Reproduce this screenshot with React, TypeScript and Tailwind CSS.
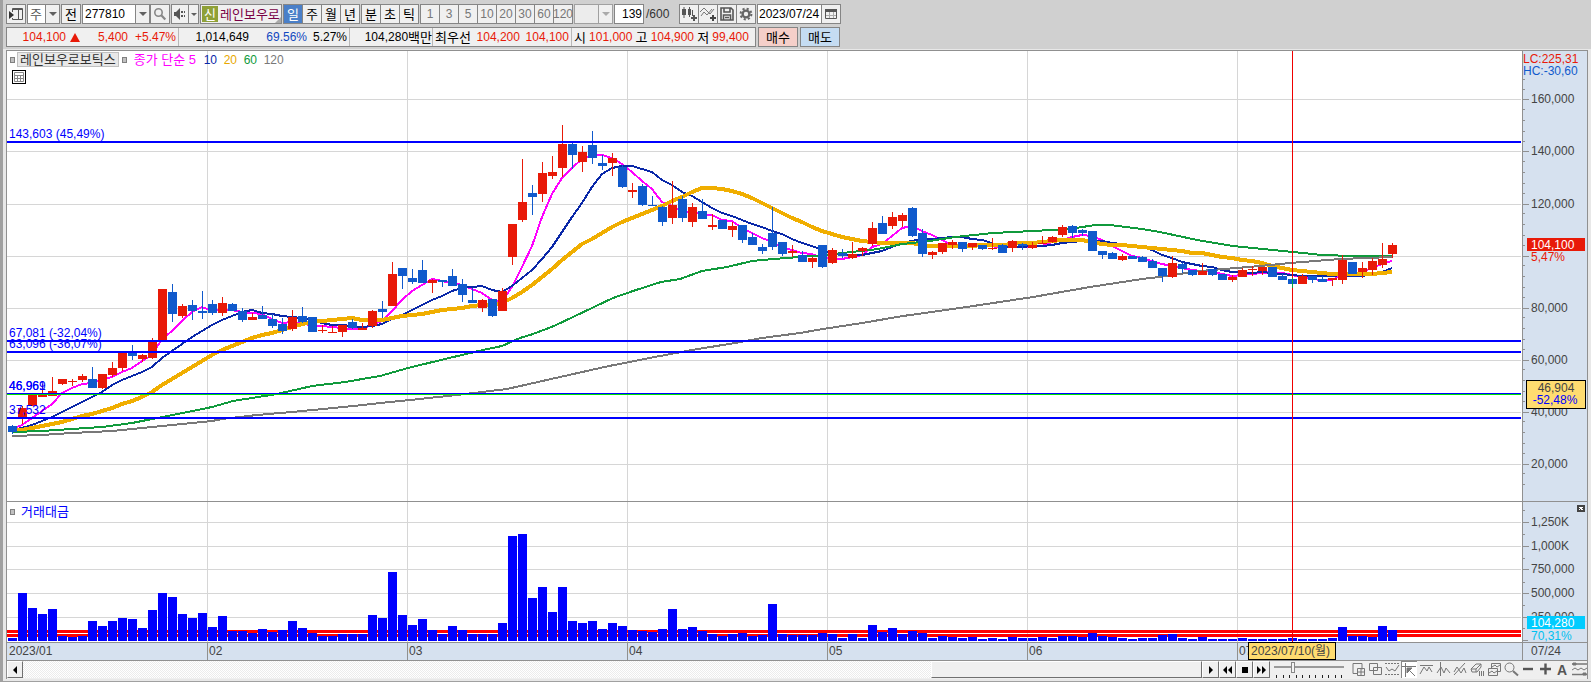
import React, { useState } from 'react';
import clsx from 'clsx';

type Direction = 'u' | 'd';
// body top, body bottom, high, low (chart y), direction
type Candle = [number, number, number, number, Direction];

const CANDLES: Candle[] = [
    [426, 432, 425, 434, 'd'], [408, 417, 406, 424, 'u'], [395, 406, 395, 406, 'u'], [394, 397, 384, 397, 'u'],
    [391, 396, 377, 396, 'u'], [379, 384, 379, 385, 'u'], [381, 382, 379, 386, 'u'], [376, 380, 374, 382, 'u'],
    [379, 388, 367, 388, 'd'], [374, 388, 374, 389, 'u'], [368, 375, 362, 377, 'u'], [353, 368, 353, 371, 'u'],
    [353, 356, 345, 360, 'd'], [355, 359, 354, 362, 'u'], [341, 358, 338, 359, 'u'], [289, 340, 289, 340, 'u'],
    [292, 314, 284, 322, 'd'], [306, 316, 304, 318, 'u'], [305, 311, 300, 320, 'd'], [311, 313, 291, 319, 'd'],
    [304, 313, 300, 315, 'd'], [303, 313, 297, 316, 'u'], [304, 311, 303, 311, 'd'], [311, 320, 308, 322, 'd'],
    [317, 320, 313, 320, 'u'], [315, 319, 306, 319, 'd'], [319, 326, 314, 328, 'd'], [324, 331, 318, 334, 'd'],
    [317, 329, 310, 331, 'u'], [316, 322, 307, 323, 'd'], [317, 332, 317, 332, 'd'], [330, 331, 325, 333, 'u'],
    [332, 333, 326, 333, 'u'], [325, 332, 325, 337, 'u'], [322, 328, 319, 329, 'd'], [328, 330, 323, 330, 'u'],
    [311, 326, 310, 328, 'u'], [309, 312, 301, 318, 'd'], [274, 306, 262, 306, 'u'], [268, 276, 268, 289, 'd'],
    [278, 282, 269, 284, 'd'], [270, 283, 260, 283, 'd'], [280, 283, 279, 293, 'u'], [280, 282, 280, 287, 'd'],
    [276, 286, 269, 286, 'd'], [284, 295, 279, 302, 'd'], [300, 303, 288, 303, 'd'], [300, 308, 299, 312, 'u'],
    [299, 316, 299, 317, 'd'], [291, 311, 288, 311, 'u'], [224, 257, 224, 265, 'u'], [202, 220, 159, 222, 'u'],
    [193, 197, 185, 215, 'd'], [173, 194, 162, 202, 'u'], [172, 176, 156, 179, 'u'], [144, 168, 125, 177, 'u'],
    [144, 155, 143, 169, 'd'], [152, 162, 146, 172, 'u'], [145, 158, 131, 164, 'd'], [163, 166, 155, 170, 'd'],
    [158, 163, 153, 176, 'u'], [167, 187, 165, 188, 'd'], [190, 192, 183, 198, 'u'], [186, 205, 184, 206, 'd'],
    [205, 206, 196, 206, 'd'], [207, 222, 206, 226, 'd'], [205, 218, 181, 224, 'u'], [199, 218, 196, 222, 'd'],
    [207, 222, 203, 227, 'u'], [211, 219, 199, 219, 'd'], [225, 227, 214, 230, 'u'], [220, 229, 220, 229, 'd'],
    [226, 230, 222, 237, 'u'], [225, 240, 225, 243, 'd'], [237, 245, 233, 245, 'd'], [247, 251, 244, 254, 'd'],
    [233, 247, 207, 250, 'd'], [242, 254, 242, 256, 'd'], [251, 253, 245, 257, 'u'], [255, 262, 251, 262, 'd'],
    [258, 262, 257, 268, 'u'], [245, 267, 245, 268, 'd'], [250, 263, 248, 264, 'u'], [253, 256, 249, 258, 'd'],
    [254, 258, 242, 259, 'u'], [248, 251, 247, 256, 'u'], [228, 244, 222, 246, 'u'], [223, 234, 216, 234, 'd'],
    [217, 226, 212, 229, 'u'], [215, 221, 213, 227, 'u'], [208, 236, 207, 237, 'd'], [233, 254, 229, 257, 'd'],
    [252, 255, 251, 259, 'u'], [243, 252, 243, 254, 'u'], [242, 245, 240, 249, 'u'], [242, 249, 242, 252, 'd'],
    [243, 247, 243, 250, 'u'], [245, 249, 245, 250, 'd'], [248, 249, 238, 250, 'u'], [245, 253, 244, 253, 'd'],
    [241, 248, 240, 252, 'u'], [244, 246, 243, 250, 'd'], [245, 248, 242, 249, 'u'], [243, 244, 236, 244, 'u'],
    [237, 242, 236, 243, 'u'], [227, 235, 225, 237, 'u'], [226, 233, 225, 238, 'd'], [230, 233, 229, 236, 'd'],
    [231, 251, 231, 251, 'd'], [251, 255, 251, 259, 'd'], [253, 259, 252, 259, 'd'], [256, 260, 254, 261, 'u'],
    [256, 259, 256, 259, 'd'], [257, 262, 256, 262, 'd'], [261, 268, 259, 268, 'd'], [268, 276, 268, 282, 'd'],
    [263, 277, 256, 278, 'u'], [264, 269, 263, 273, 'd'], [270, 275, 270, 276, 'd'], [271, 275, 263, 275, 'u'],
    [269, 275, 269, 276, 'd'], [274, 280, 274, 280, 'd'], [277, 280, 275, 282, 'u'], [270, 277, 268, 277, 'u'],
    [269, 270, 266, 276, 'u'], [267, 271, 267, 275, 'u'], [267, 277, 267, 277, 'd'], [276, 280, 274, 280, 'd'],
    [279, 284, 279, 284, 'd'], [276, 284, 274, 284, 'u'], [276, 280, 276, 283, 'd'], [279, 282, 276, 282, 'd'],
    [278, 280, 278, 286, 'u'], [260, 280, 255, 284, 'u'], [262, 274, 262, 274, 'd'], [268, 272, 262, 278, 'u'],
    [261, 270, 258, 275, 'u'], [259, 265, 243, 268, 'u'], [245, 254, 243, 258, 'u'],
];

// bar tops, the base line is at 641
const VOLUME = [
    638, 593, 608, 614, 609, 636, 637, 636, 621, 626, 621, 618, 619, 628, 610, 593, 597, 614, 618, 613,
    627, 616, 631, 631, 633, 629, 632, 630, 621, 628, 633, 636, 636, 634, 634, 634, 615, 618, 572, 615,
    625, 619, 630, 634, 626, 630, 634, 634, 634, 623, 536, 534, 598, 587, 612, 587, 621, 623, 621, 629,
    623, 626, 630, 631, 632, 629, 609, 629, 627, 631, 634, 636, 634, 633, 636, 635, 604, 634, 635, 635,
    635, 633, 634, 638, 634, 638, 625, 632, 628, 634, 631, 633, 638, 636, 637, 638, 637, 639, 638, 639,
    637, 638, 638, 637, 638, 636, 636, 637, 633, 636, 637, 638, 639, 638, 638, 635, 634, 638, 639, 637,
    639, 639, 639, 638, 639, 639, 639, 639, 638, 639, 639, 639, 638, 627, 636, 636, 637, 626, 630,
];

const MA60 =
    '12,432 42,431 72,429 102,427 132,423 152,419 163,417 212,407 233,401 277,394 312,386 345,382 380,376 408,368 445,359 483,350 502,346 520,338 533,334 554,326 573,317 613,298 633,291 661,282 680,279 702,271 727,267 752,261 773,259 800,257 813,256 843,253 878,249 902,244 930,241 955,237 993,233 1033,231 1070,229 1095,225 1110,225 1142,229 1160,232 1197,240 1233,246 1293,252 1322,255 1353,256 1392,256';
const MA120 =
    '12,436 42,435 72,433 112,431 132,429 172,425 212,421 222,419 257,415 292,412 323,409 353,406 390,402 410,400 457,395 507,389 560,377 609,366 660,356 692,350 735,343 762,338 800,333 823,329 862,323 903,316 960,308 1033,297 1090,287 1142,279 1160,277 1200,271 1260,266 1290,263 1340,259 1392,257';

const PRICE_TICKS: [number, string][] = [
    [99, '160,000'], [151, '140,000'], [204, '120,000'], [256, ''],
    [308, '80,000'], [360, '60,000'], [412, '40,000'], [464, '20,000'],
];
const VOLUME_TICKS: [number, string][] = [
    [522, '1,250K'], [546, '1,000K'], [569, '750,000'], [593, '500,000'], [617, '250,000'],
];
const MONTHS: [number, string][] = [[207, '02'], [407, '03'], [627, '04'], [827, '05'], [1027, '06'], [1237, '07']];
const LEVELS: [number, string][] = [
    [142, '143,603 (45,49%)'], [341, '67,081 (-32,04%)'], [352, '63,096 (-36,07%)'], [418, '37,532'],
];

const PERIODS = ['일', '주', '월', '년'];
const UNITS = ['분', '초', '틱'];
const MINUTES = ['1', '3', '5', '10', '20', '30', '60', '120'];

const candleX = (i: number) => 8 + i * 10;

// Moving average of the closes, bars before the first one count as `before`
function movingAverage(size: number, before: number) {
    const closes = CANDLES.map(([top, bottom, , , dir]) => (dir === 'u' ? top : bottom));
    return closes
        .map((_, i) => {
            let sum = 0;
            for (let k = i - size + 1; k <= i; k++) {
                sum += k < 0 ? before : closes[k];
            }
            return `${candleX(i) + 4},${Math.round(sum / size)}`;
        })
        .join(' ');
}

const box = 'h-5 border border-[#858585] bg-[#f0f0f0] flex items-center justify-center shrink-0';

function Arrow({ className = 'text-[#606060]' }: { className?: string }) {
    return (
        <svg viewBox="0 0 8 4" className={clsx('w-2 h-1 shrink-0', className)} fill="currentColor">
            <path d="M0 0h8L4 4z" />
        </svg>
    );
}

function IconButton({ label, className, children }: { label: string; className: string; children: React.ReactNode }) {
    return (
        <button type="button" aria-label={label} className={clsx(box, className)}>
            {children}
        </button>
    );
}

function Toolbar() {
    const [period, setPeriod] = useState('일');
    const [code, setCode] = useState('277810');

    return (
        <div className="flex items-center text-[13px] leading-none text-black">
            <IconButton label="메뉴" className="w-5 mr-px">
                <svg viewBox="0 0 14 14" className="size-3.5" fill="none" stroke="#555">
                    <path d="M3.5 5V1.5h10v11h-10V11M3 2.5h11M9.5 3v9" />
                    <path d="M0 4l5 4-5 4z" fill="#333" stroke="none" />
                </svg>
            </IconButton>
            <div className="flex mr-px">
                <select aria-label="종목 구분" className="appearance-none h-5 w-[18px] pl-0.5 border border-r-0 border-[#858585] bg-white text-[#555]">
                    <option>주</option>
                </select>
                <span className={clsx(box, 'w-[15px]')}><Arrow /></span>
            </div>
            <button type="button" className={clsx(box, 'w-5 mr-px')}>전</button>
            <input
                aria-label="종목코드"
                value={code}
                onChange={e => setCode(e.target.value)}
                className="h-5 w-[54px] pl-0.5 border border-[#858585] bg-white text-xs leading-none"
            />
            <IconButton label="종목 목록" className="w-[15px] -ml-px"><Arrow /></IconButton>
            <IconButton label="검색" className="w-5 mr-px">
                <svg viewBox="0 0 14 14" className="size-3.5" fill="none" stroke="#888" strokeWidth="1.6">
                    <circle cx="5.5" cy="5.5" r="3.7" />
                    <path d="M8.3 8.3l4 4.2" strokeWidth="2.2" />
                </svg>
            </IconButton>
            <IconButton label="소리" className="w-[18px]">
                <svg viewBox="0 0 14 14" className="size-3.5" fill="#555">
                    <path d="M1 5h2l4-4v12L3 9H1zM8 4h2v2H8zM8 8h2v2H8zM11 4h1v2h-1zM11 8h1v2h-1z" />
                </svg>
            </IconButton>
            <IconButton label="소리 설정" className="w-[11px] -ml-px mr-px">
                <svg viewBox="0 0 6 3" className="w-1.5 h-[3px] shrink-0" fill="#606060"><path d="M0 0h6L3 3z" /></svg>
            </IconButton>
            <div className="relative flex h-5 w-[82px] items-center mr-px pl-px border border-[#858585] bg-[#f0f0f0] overflow-hidden whitespace-nowrap">
                <span className="flex h-4 w-4 shrink-0 items-center justify-center bg-[#8fa037] text-white">신</span>
                <span className="ml-0.5 text-[#7a0045]">레인보우로</span>
                <svg viewBox="0 0 6 6" className="absolute right-0 bottom-0 size-1.5" fill="#aaa"><path d="M6 0v6H0z" /></svg>
            </div>
            <div className="flex mr-px">
                {PERIODS.map(p => (
                    <button
                        key={p}
                        type="button"
                        onClick={() => setPeriod(p)}
                        className={clsx(box, 'w-5 -mr-px', p === period && 'bg-[#4a7fc8]! text-white')}
                    >
                        {p}
                    </button>
                ))}
            </div>
            <div className="flex ml-px mr-0.5">
                {UNITS.map(u => (
                    <button key={u} type="button" className={clsx(box, 'w-5 -mr-px')}>{u}</button>
                ))}
            </div>
            <div className="flex mr-0.5">
                {MINUTES.map(m => (
                    <button key={m} type="button" className={clsx(box, 'w-5 -mr-px text-xs text-[#777]')}>{m}</button>
                ))}
            </div>
            <div className="flex mr-px">
                <select aria-label="분 선택" disabled className="appearance-none h-5 w-6 border border-r-0 border-[#a0a0a0] bg-[#ececec]" />
                <span className={clsx(box, 'w-[15px] border-[#a0a0a0]')}><Arrow className="text-[#aaa]" /></span>
            </div>
            <input
                aria-label="표시 봉 개수"
                defaultValue="139"
                className="h-5 w-[30px] pr-px border border-[#858585] bg-white text-right text-xs leading-none"
            />
            <span className="ml-0.5 w-[33px] text-xs leading-none text-[#333]">/600</span>
            <IconButton label="지표 추가" className="w-5">
                <svg viewBox="0 0 16 16" className="size-4 shrink-0" fill="#555">
                    <path d="M1 3h4v6H1zM2.5 1h1v11h-1zM7 3h3v6H7zM8 1h1v10H8zM11 4h1v6h-1zM12 9h2v2h2v2h-2v2h-2v-2h-2v-2h2z" />
                </svg>
            </IconButton>
            <IconButton label="차트 추가" className="w-5 -ml-px">
                <svg viewBox="0 0 16 16" className="size-4 shrink-0" fill="none" stroke="#777">
                    <path d="M0 6l4-4 6 6 4-5M1 10l3-4 3 3 5-6" />
                    <path d="M12 9h2v2h2v2h-2v2h-2v-2h-2v-2h2z" fill="#444" stroke="none" />
                </svg>
            </IconButton>
            <IconButton label="저장" className="w-5 -ml-px">
                <svg viewBox="0 0 14 14" className="size-3.5" fill="none" stroke="#555" strokeWidth="1.6">
                    <path d="M1 1h10l2 2v10H1zM4 1v4h6V1M3.5 13V8h7v5M5 10.5h4" />
                </svg>
            </IconButton>
            <IconButton label="설정" className="w-5 -ml-px mr-px">
                <svg viewBox="0 0 14 14" className="size-3.5" fill="none" stroke="#666">
                    <circle cx="7" cy="7" r="3.4" strokeWidth="2.4" />
                    <circle cx="7" cy="7" r="5.4" strokeWidth="2" strokeDasharray="2.12 2.12" />
                </svg>
            </IconButton>
            <input
                aria-label="기준일"
                defaultValue="2023/07/24"
                className="h-5 w-[65px] pl-px border border-[#858585] bg-white text-xs leading-none"
            />
            <IconButton label="달력" className="w-5 -ml-px">
                <svg viewBox="0 0 12 12" className="size-3" fill="none" stroke="#555">
                    <path d="M.5 1.5h11v9H.5z" />
                    <path d="M0 2.5h12" strokeWidth="3" />
                    <path d="M1 7.5h10M4.5 4v6M8.5 4v6" stroke="#aaa" />
                </svg>
            </IconButton>
        </div>
    );
}

function Quote() {
    return (
        <div className="flex text-xs leading-none text-black">
            <div className="flex h-5 w-[750px] shrink-0 items-center mr-0.5 border border-[#858585] bg-[#f0f0f0] whitespace-nowrap text-[#e81a08]">
                <div className="flex h-full w-[172px] items-center justify-end pr-0.5 border-r border-[#b8b8b8]">
                    <span>104,100</span>
                    <svg viewBox="0 0 10 9" className="w-2.5 h-[9px] ml-1" fill="currentColor"><path d="M5 0l5 9H0z" /></svg>
                    <span className="w-12 text-right">5,400</span>
                    <span className="w-12 text-right">+5.47%</span>
                </div>
                <div className="flex h-full w-[171px] items-center justify-end pr-0.5 border-r border-[#b8b8b8] text-black">
                    <span>1,014,649</span>
                    <span className="w-[58px] text-right text-[#1048c0]">69.56%</span>
                    <span className="w-10 text-right">5.27%</span>
                </div>
                <div className="flex h-full w-[83px] items-center justify-end border-r border-[#b8b8b8] text-black">
                    <span>104,280</span><span className="text-[13px] leading-none">백만</span>
                </div>
                <div className="flex h-full w-[139px] items-center justify-between px-0.5 border-r border-[#b8b8b8]">
                    <span className="text-[13px] leading-none text-black">최우선</span>
                    <span>104,200</span>
                    <span>104,100</span>
                </div>
                <div className="flex h-full flex-1 items-center justify-between pl-0.5 pr-1.5">
                    <span className="text-[13px] leading-none text-black">시</span><span>101,000</span>
                    <span className="text-[13px] leading-none text-black">고</span><span>104,900</span>
                    <span className="text-[13px] leading-none text-black">저</span><span>99,400</span>
                </div>
            </div>
            <button type="button" className="h-5 w-10 mr-0.5 border border-[#858585] bg-[#f5cfc9] text-[13px] leading-none">매수</button>
            <button type="button" className="h-5 w-10 border border-[#858585] bg-[#c5dcf2] text-[13px] leading-none">매도</button>
        </div>
    );
}

function PlotArea() {
    return (
        <svg
            viewBox="7 51 1515 609"
            preserveAspectRatio="none"
            className="h-[609px] w-0 min-w-0 flex-1 bg-white text-xs"
            shapeRendering="crispEdges"
        >
            {/* grid */}
            {[...PRICE_TICKS, ...VOLUME_TICKS].map(([y]) => (
                <rect key={y} x="7" y={y} width="1514" height="1" fill="#d6d6d6" />
            ))}
            {MONTHS.map(([x]) => (
                <rect key={x} x={x} y="51" width="1" height="591" fill="#d6d6d6" />
            ))}
            <rect x="7" y="501" width="1515" height="1" fill="#909090" />

            {/* moving averages */}
            <g fill="none" strokeWidth="2" strokeLinejoin="round">
                <polyline points={movingAverage(5, 428)} stroke="#ff00ff" />
                <polyline points={movingAverage(10, 430)} stroke="#0a28a8" />
                <polyline points={movingAverage(20, 431)} stroke="#f0ae00" strokeWidth="4" />
                <polyline points={MA60} stroke="#109a3c" />
                <polyline points={MA120} stroke="#787878" />
            </g>

            {CANDLES.map(([top, bottom, high, low, dir], i) => (
                <g key={i} fill={dir === 'u' ? '#e81a08' : '#105acc'}>
                    <rect x={candleX(i) + 4} y={high} width="1" height={low - high} />
                    <rect x={candleX(i)} y={top} width="9" height={bottom - top} />
                </g>
            ))}

            {LEVELS.map(([y, label]) => (
                <g key={y} fill="#0000ff">
                    <rect x="7" y={y - 1} width="1514" height="2" />
                    <text x="9" y={y - 4}>{label}</text>
                </g>
            ))}
            <rect x="7" y="393" width="1514" height="1" fill="#0000ff" />
            <rect x="7" y="394" width="1514" height="1" fill="#00e000" />
            <text x="9" y="390" fill="#0000ff">46,969</text>
            <text x="9" y="390" fill="#0000ff">46,961</text>

            {/* traded value */}
            <rect x="7" y="630" width="1514" height="3" fill="#ff0000" />
            <rect x="7" y="634" width="1514" height="3" fill="#ff0000" />
            {VOLUME.map((y, i) => (
                <rect key={i} x={candleX(i)} y={y} width="9" height={641 - y} fill="#0000ff" />
            ))}

            {/* date axis */}
            <rect x="7" y="642" width="1515" height="18" fill="#d6e1ef" />
            <rect x="7" y="642" width="1515" height="1" fill="#909090" />
            <g fill="#444444">
                <text x="9" y="655">2023/01</text>
                {MONTHS.map(([x, label]) => (
                    <React.Fragment key={x}>
                        <rect x={x} y="642" width="1" height="18" fill="#909090" />
                        <text x={x + 2} y="655">{label}</text>
                    </React.Fragment>
                ))}
            </g>

            {/* crosshair */}
            <rect x="1292" y="51" width="1" height="591" fill="#f00000" />
            <rect x="1292" y="278" width="1" height="10" fill="#00a040" />
            <rect x="1248" y="642" width="88" height="18" fill="#000" />
            <rect x="1249" y="643" width="86" height="16" fill="#ffdc70" />
            <text x="1251" y="655" fill="#444">2023/07/10(월)</text>
        </svg>
    );
}

function ValueAxis() {
    const minor: number[] = [];
    for (let y = 79; y < 490; y += 52) {
        minor.push(y, y + 10);
        if (y + 41 < 500) {
            minor.push(y + 30, y + 41);
        }
    }
    return (
        <svg viewBox="1522 51 65 609" className="h-[609px] w-[65px] shrink-0 bg-[#d6e1ef] text-xs" shapeRendering="crispEdges">
            <g fill="#909090">
                <rect x="1522" y="51" width="1" height="609" />
                <rect x="1522" y="501" width="65" height="1" />
                <rect x="1522" y="642" width="65" height="1" />
                <rect x="1522" y="640" width="6" height="1" />
                {[...minor, 510, 534, 558, 582, 605, 628].map(y => (
                    <rect key={y} x="1522" y={y} width="3" height="1" />
                ))}
                {[...PRICE_TICKS, ...VOLUME_TICKS].map(([y]) => (
                    <rect key={y} x="1522" y={y} width="7" height="1" />
                ))}
            </g>
            <g fill="#444444">
                {[...PRICE_TICKS, ...VOLUME_TICKS].map(([y, label]) => (
                    <text key={y} x="1531" y={y + 4}>{label}</text>
                ))}
                <text x="1531" y="655">07/24</text>
            </g>
            <text x="1523" y="63" fill="#e81a08">LC:225,31</text>
            <text x="1523" y="75" fill="#105acc">HC:-30,60</text>

            <rect x="1527" y="238" width="58" height="13" fill="#e81a08" />
            <text x="1531" y="249" fill="#fff">104,100</text>
            <text x="1531" y="261" fill="#e81a08">5,47%</text>

            <rect x="1526" y="380" width="60" height="29" fill="#000" />
            <rect x="1527" y="381" width="58" height="27" fill="#ffdc70" />
            <text x="1556" y="392" textAnchor="middle" fill="#444">46,904</text>
            <text x="1555" y="404" textAnchor="middle" fill="#0000ff">-52,48%</text>

            <rect x="1527" y="616" width="58" height="13" fill="#00ccff" />
            <text x="1531" y="627" fill="#fff">104,280</text>
            <text x="1531" y="640" fill="#00c0f0">70,31%</text>

            <rect x="1577" y="505" width="8" height="7" fill="#444" />
            <path d="M1579 507l4 3M1583 507l-4 3" stroke="#fff" />
        </svg>
    );
}

const marker = 'w-[5px] h-1.5 border border-[#808080] bg-[#c0c0c0] shrink-0';

function Legend() {
    return (
        <div className="absolute left-[3px] top-px text-[13px] leading-none">
            <div className="flex h-[15px] items-center whitespace-nowrap">
                <span className={marker} />
                <span className="flex h-[15px] items-center ml-0.5 px-0.5 border border-[#c0c0c0] bg-[#e8e8e8] text-[#333]">레인보우로보틱스</span>
                <span className={clsx(marker, 'ml-[3px]')} />
                <span className="ml-[7px] w-[70px] text-[#ff00ff]">종가 단순 5</span>
                <span className="w-5 text-xs leading-none text-[#0a28a8]">10</span>
                <span className="w-5 text-xs leading-none text-[#e8a800]">20</span>
                <span className="w-5 text-xs leading-none text-[#109a3c]">60</span>
                <span className="text-xs leading-none text-[#787878]">120</span>
            </div>
            <button type="button" aria-label="데이터 표" className="mt-[3px] ml-0.5 flex size-3.5 items-center justify-center border border-black bg-white">
                <svg viewBox="0 0 10 10" className="size-2.5" fill="none" stroke="#888">
                    <path d="M.5 .5h9v9h-9zM0 3.5h10M0 6.5h10M3.5 3v7M6.5 3v7" />
                </svg>
            </button>
        </div>
    );
}

function VolumeLegend() {
    return (
        <div className="absolute left-[3px] top-[453px] flex h-[15px] items-center text-[13px] leading-none whitespace-nowrap">
            <span className={marker} />
            <span className="ml-1.5 text-[#0000ff]">거래대금</span>
        </div>
    );
}

const DRAW_TOOLS: { label: string; art: React.ReactNode }[] = [
    { label: '새 창', art: <path d="M2 1.5h9v6M7 11.5H2v-10M6.5 6.5h7v7h-7zM6.5 10h7M10 6.5v7" /> },
    { label: '창 겹침', art: <path d="M1.5 1.5h8v7h-8zM5.5 5.5h8v7h-8z" fill="#efefef" /> },
    { label: '영역', art: <><path d="M0 1.5h14M0 12.5h14" strokeDasharray="2 1" /><path d="M1 5l3 4 3-2 3 2 4-6" /></> },
    { label: '십자선', art: <><path d="M3.5 0v14M0 3.5h14M7 7l6 6" /><path d="M5 5h5l-5 5z" fill="#777" /></> },
    { label: '수평선', art: <path d="M1 3.5h13M1 12l4-7 3 4 2-4 3 5" /> },
    { label: '수직선', art: <path d="M4.5 0v14M1 11l4-6 3 6 2-5 4 5" /> },
    { label: '추세선', art: <path d="M1 13L12 1M1 10l3-5 4 6 3-5 2 5" /> },
    { label: '지우개', art: <path d="M1 7l5-5h5v3l-4 5H2zM1 7h5l5-5M6 7v3M9.5 9v5M11.5 9v5M13.5 9v5" /> },
    { label: '차트 겹침', art: <path d="M4.5 6V1.5h9v8H11M5 5l3-2 2 2 3-2M1.5 6.5h9v7h-9zM2 11l3-2 2 2 3-2" /> },
    { label: '돋보기', art: <><circle cx="5.5" cy="5.5" r="4.5" /><path d="M9 9l5 4.5" strokeWidth="2" /></> },
    { label: '축소', art: <path d="M2 7h10" strokeWidth="2.4" stroke="#555" /> },
    { label: '확대', art: <path d="M2 7h11M7.5 1.5v11" strokeWidth="2.4" stroke="#555" /> },
];

function ScrollBar() {
    const [speed, setSpeed] = useState(25);
    const btn = 'h-[17px] flex shrink-0 items-center justify-center border border-t-white border-l-white border-r-[#707070] border-b-[#707070] bg-[#f0f0f0]';

    return (
        <div className="flex h-[18px] items-start bg-[#efefef]">
            <button type="button" aria-label="이전" className={clsx(btn, 'w-4')}>
                <svg viewBox="0 0 4 8" className="w-1 h-2 shrink-0"><path d="M4 0v8L0 4z" /></svg>
            </button>
            <div className="flex h-[17px] min-w-0 flex-1 justify-end bg-[repeating-conic-gradient(#ffffff_0_25%,#ececec_0_50%)] bg-[length:2px_2px]">
                <div className={clsx(btn, 'w-[23%]')} />
            </div>
            <button type="button" aria-label="다음" className={clsx(btn, 'w-[17px]')}>
                <svg viewBox="0 0 4 8" className="w-1 h-2 shrink-0"><path d="M0 0v8l4-4z" /></svg>
            </button>
            <button type="button" aria-label="뒤로" className={clsx(btn, 'w-[17px]')}>
                <svg viewBox="0 0 9 8" className="w-[9px] h-2 shrink-0"><path d="M4 0v8L0 4zM9 0v8L5 4z" /></svg>
            </button>
            <button type="button" aria-label="정지" className={clsx(btn, 'w-[17px]')}>
                <span className="size-1.5 bg-black" />
            </button>
            <button type="button" aria-label="앞으로" className={clsx(btn, 'w-[17px]')}>
                <svg viewBox="0 0 9 8" className="w-[9px] h-2 shrink-0"><path d="M0 0v8l4-4zM5 0v8l4-4z" /></svg>
            </button>
            <div className="flex w-[70px] shrink-0 flex-col ml-1 mr-1.5">
                <input
                    type="range"
                    aria-label="재생 속도"
                    min={0}
                    max={100}
                    value={speed}
                    onChange={e => setSpeed(Number(e.target.value))}
                    className="h-3 w-full appearance-none bg-[linear-gradient(#999,#999)] bg-[length:100%_2px] bg-center bg-no-repeat [&::-webkit-slider-thumb]:appearance-none [&::-webkit-slider-thumb]:h-[11px] [&::-webkit-slider-thumb]:w-1 [&::-webkit-slider-thumb]:border [&::-webkit-slider-thumb]:border-[#888] [&::-webkit-slider-thumb]:bg-[#f4f4f4]"
                />
                <div className="mt-0.5 flex justify-between px-0.5">
                    {MINUTES.concat('240', '480', '960').map(m => <span key={m} className="h-[3px] w-px bg-[#222]" />)}
                </div>
            </div>
            <div className="flex shrink-0 gap-px">
                {DRAW_TOOLS.map(({ label, art }, i) => (
                    <button
                        key={label}
                        type="button"
                        aria-label={label}
                        className={clsx('flex h-[17px] w-4 items-center justify-center', i === 3 && 'border-t border-l border-[#888] bg-white')}
                    >
                        <svg viewBox="0 0 15 15" className="size-[15px] shrink-0" fill="none" stroke="#777">{art}</svg>
                    </button>
                ))}
                <button type="button" aria-label="글자" className="h-[17px] w-4 text-sm leading-none font-bold text-[#555]">A</button>
                <button type="button" aria-label="구간" className="flex h-[17px] w-4 items-center justify-center">
                    <svg viewBox="0 0 15 15" className="size-[15px] shrink-0" fill="none" stroke="#777">
                        <path d="M0 2h15M0 12.5h15" strokeWidth="1.5" />
                        <path d="M1 1h3v2H1zM11 11h3v2h-3z" fill="#777" />
                        <path d="M0 8l3-2 3 2 3-2 3 2 3-2" />
                    </svg>
                </button>
            </div>
        </div>
    );
}

export default function App() {
    return (
        <div className="w-full overflow-hidden border-l-3 border-b border-[#a0a0a0] bg-[#e8e8e8] pb-0.5 font-['Liberation_Sans','Noto_Sans_CJK_KR',sans-serif]">
            <header className="flex h-[49px] flex-col gap-[3px] bg-[#d0d0d0] pt-1 pl-[3px]">
                <Toolbar />
                <Quote />
            </header>
            <main className="mt-px mx-[3px] border-x border-t border-[#909090]">
                <div className="relative flex border-b border-[#909090]">
                    <PlotArea />
                    <ValueAxis />
                    <Legend />
                    <VolumeLegend />
                </div>
                <ScrollBar />
            </main>
        </div>
    );
}
